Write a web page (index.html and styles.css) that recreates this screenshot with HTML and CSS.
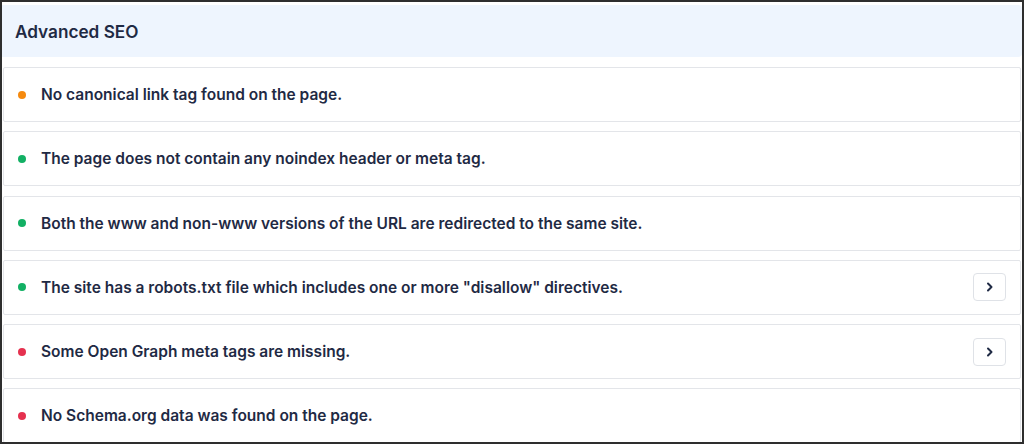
FILE: index.html
```html
<!DOCTYPE html>
<html>
<head>
<meta charset="utf-8">
<link rel="stylesheet" href="styles.css">
</head>
<body>
<div class="frame">
  <div class="header"><h2 class="title">Advanced SEO</h2></div>
  <div class="list">
    <div class="row"><span class="dot dot-orange"></span><span class="msg">No canonical link tag found on the page.</span></div>
    <div class="row"><span class="dot dot-green"></span><span class="msg">The page does not contain any noindex header or meta tag.</span></div>
    <div class="row"><span class="dot dot-green"></span><span class="msg">Both the www and non-www versions of the URL are redirected to the same site.</span></div>
    <div class="row"><span class="dot dot-green"></span><span class="msg">The site has a robots.txt file which includes one or more "disallow" directives.</span>
      <button class="expand" aria-label="Expand"><svg width="10" height="12" viewBox="0 0 10 12"><path d="M3 2.5 L6.5 6 L3 9.5" fill="none" stroke="#1f2a44" stroke-width="2" stroke-linecap="round" stroke-linejoin="round"/></svg></button>
    </div>
    <div class="row"><span class="dot dot-red"></span><span class="msg">Some Open Graph meta tags are missing.</span>
      <button class="expand" aria-label="Expand"><svg width="10" height="12" viewBox="0 0 10 12"><path d="M3 2.5 L6.5 6 L3 9.5" fill="none" stroke="#1f2a44" stroke-width="2" stroke-linecap="round" stroke-linejoin="round"/></svg></button>
    </div>
    <div class="row"><span class="dot dot-red"></span><span class="msg">No Schema.org data was found on the page.</span></div>
  </div>
</div>
</body>
</html>
```
FILE: styles.css
```css
html, body {
  margin: 0;
  padding: 0;
  background: #ffffff;
}
.frame {
  box-sizing: border-box;
  width: 1024px;
  height: 444px;
  border: 2px solid #2e2e2e;
  padding-top: 3px;
  overflow: hidden;
  font-family: Inter, "Noto Sans", sans-serif;
  color: #1f2a44;
}
.header {
  height: 52px;
  background: #eef5fe;
  border-radius: 0 4px 4px 0;
  display: flex;
  align-items: center;
  padding-left: 13px;
}
.title {
  margin: 0;
  font-size: 17.2px;
  font-weight: 600;
}
.list {
  display: flex;
  flex-direction: column;
  gap: 9.3px;
  margin-top: 10px;
  padding: 0 1px;
}
.row {
  box-sizing: border-box;
  height: 55px;
  flex-shrink: 0;
  border: 1px solid #e3e5e9;
  border-radius: 2px;
  display: flex;
  align-items: center;
  padding-left: 14px;
  padding-right: 14px;
}
.dot {
  width: 8px;
  height: 8px;
  border-radius: 50%;
  flex-shrink: 0;
  margin-right: 15px;
}
.dot-orange { background: #f58a0f; }
.dot-green { background: #12b064; }
.dot-red { background: #e5314f; }
.msg {
  font-size: 15.5px;
  font-weight: 600;
  flex: 1;
}
.expand {
  width: 33px;
  height: 28px;
  border: 1px solid #dfe2e7;
  border-radius: 4px;
  background: #ffffff;
  display: flex;
  align-items: center;
  justify-content: center;
  padding: 0;
}
```
